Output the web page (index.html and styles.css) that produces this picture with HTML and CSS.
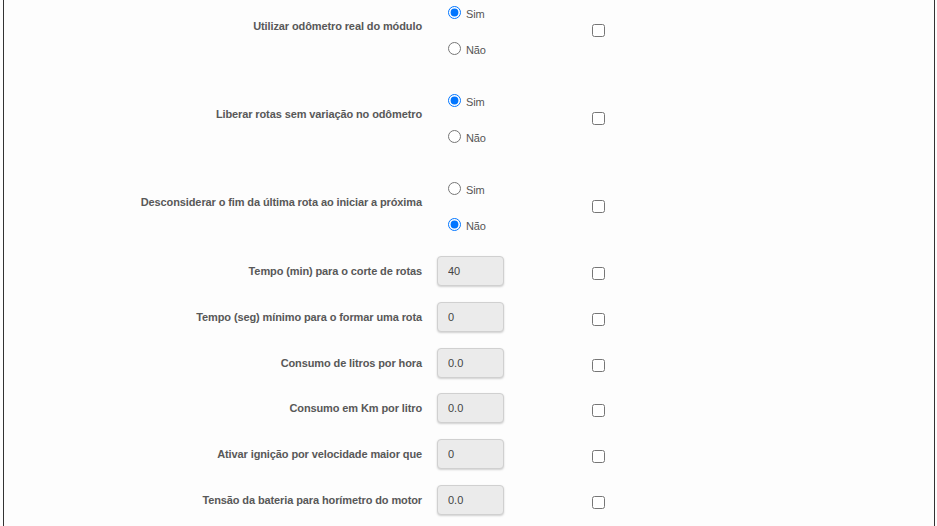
FILE: index.html
```html
<!DOCTYPE html>
<html lang="pt-BR">
<head>
<meta charset="utf-8">
<title>Configurações</title>
<link rel="stylesheet" href="styles.css">
</head>
<body>
<div class="panel">
  <form class="form">
    <div class="row row-radio first">
      <label class="lbl">Utilizar odômetro real do módulo</label>
      <div class="ctrl radios">
        <label class="radio"><input type="radio" name="r1" checked><span>Sim</span></label>
        <label class="radio"><input type="radio" name="r1"><span>Não</span></label>
      </div>
      <div class="chk"><input type="checkbox"></div>
    </div>
    <div class="row row-radio">
      <label class="lbl">Liberar rotas sem variação no odômetro</label>
      <div class="ctrl radios">
        <label class="radio"><input type="radio" name="r2" checked><span>Sim</span></label>
        <label class="radio"><input type="radio" name="r2"><span>Não</span></label>
      </div>
      <div class="chk"><input type="checkbox"></div>
    </div>
    <div class="row row-radio">
      <label class="lbl">Desconsiderar o fim da última rota ao iniciar a próxima</label>
      <div class="ctrl radios">
        <label class="radio"><input type="radio" name="r3"><span>Sim</span></label>
        <label class="radio"><input type="radio" name="r3" checked><span>Não</span></label>
      </div>
      <div class="chk"><input type="checkbox"></div>
    </div>
    <div class="row row-input">
      <label class="lbl">Tempo (min) para o corte de rotas</label>
      <div class="ctrl"><input class="field" type="text" value="40" readonly></div>
      <div class="chk"><input type="checkbox"></div>
    </div>
    <div class="row row-input">
      <label class="lbl">Tempo (seg) mínimo para o formar uma rota</label>
      <div class="ctrl"><input class="field" type="text" value="0" readonly></div>
      <div class="chk"><input type="checkbox"></div>
    </div>
    <div class="row row-input">
      <label class="lbl">Consumo de litros por hora</label>
      <div class="ctrl"><input class="field" type="text" value="0.0" readonly></div>
      <div class="chk"><input type="checkbox"></div>
    </div>
    <div class="row row-input">
      <label class="lbl">Consumo em Km por litro</label>
      <div class="ctrl"><input class="field" type="text" value="0.0" readonly></div>
      <div class="chk"><input type="checkbox"></div>
    </div>
    <div class="row row-input">
      <label class="lbl">Ativar ignição por velocidade maior que</label>
      <div class="ctrl"><input class="field" type="text" value="0" readonly></div>
      <div class="chk"><input type="checkbox"></div>
    </div>
    <div class="row row-input">
      <label class="lbl">Tensão da bateria para horímetro do motor</label>
      <div class="ctrl"><input class="field" type="text" value="0.0" readonly></div>
      <div class="chk"><input type="checkbox"></div>
    </div>
  </form>
</div>
</body>
</html>
```

FILE: styles.css
```css
html, body {
  margin: 0;
  padding: 0;
  background: #fdfdfd;
}
body {
  font-family: "Liberation Sans", Arial, sans-serif;
  font-size: 11px;
  color: #555;
}
.panel {
  margin: 0 2px 0 3px;
  height: 526px;
  border-left: 1px solid #333;
  border-right: 1px solid #333;
  overflow: hidden;
  background: #fdfdfd;
}
.form {
  display: flex;
  flex-direction: column;
}
.row {
  display: grid;
  grid-template-columns: 433px 155px 1fr;
  align-items: center;
  margin-bottom: 16px;
}
.row.first {
  margin-top: -8px;
}
.row-radio {
  padding: 10px 0 6px;
}
.row-input {
  height: 30px;
  margin-bottom: 15.8px;
}
.lbl {
  text-align: right;
  padding-right: 15px;
  font-weight: bold;
  color: #585858;
  letter-spacing: -0.11px;
}
.row-radio .lbl {
  padding-bottom: 9px;
}
.radios {
  display: flex;
  flex-direction: column;
  gap: 16px;
  padding-left: 11px;
}
.radio {
  display: flex;
  align-items: center;
  height: 20px;
  color: #555;
  letter-spacing: -0.1px;
}
.radio input {
  width: 13px;
  height: 13px;
  margin: 0 5px 0 0;
}
.radio span {
  padding-top: 3px;
}
.field {
  box-sizing: border-box;
  width: 67px;
  height: 30px;
  margin: 0;
  padding: 0 10px;
  border: 1px solid #d0d0d0;
  border-radius: 4px;
  background: #ebebeb;
  box-shadow: 0 1px 2px rgba(0, 0, 0, 0.18);
  font-family: "Liberation Sans", Arial, sans-serif;
  font-size: 11px;
  color: #444;
  outline: none;
}
.chk {
  display: flex;
  align-items: center;
}
.chk input {
  width: 13px;
  height: 13px;
  margin: 0;
}
.row-input .chk input {
  margin-top: 5px;
}
```
